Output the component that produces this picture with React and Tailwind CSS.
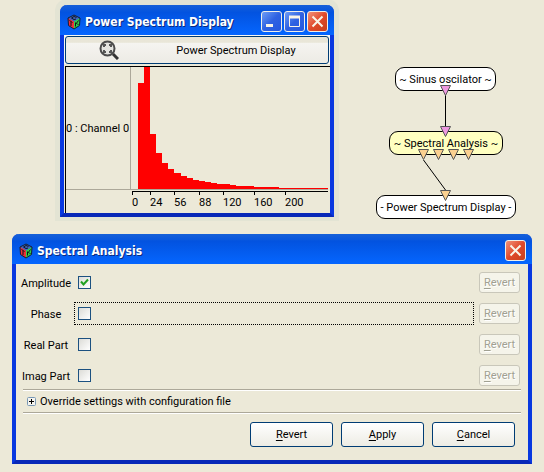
import React from "react";

const BARS = [
  [138, 6, 106], [144, 6, 122], [150, 6, 55], [156, 6, 36], [162, 6, 26], [168, 6, 20],
  [174, 7, 16], [181, 6, 13], [187, 6, 11], [193, 6, 9], [199, 6, 8], [205, 6, 7],
  [211, 6, 6], [217, 13, 5], [230, 6, 4], [236, 18, 3], [254, 25, 2], [279, 49, 1],
];

const TICKS = [
  [132, "0"], [150, "24"], [174, "56"], [199, "88"], [223, "120"], [254, "160"], [285, "200"],
];

function CubeIcon() {
  return (
    <svg width="14" height="16" viewBox="0 0 14 16" className="shrink-0" aria-hidden="true">
      <path d="M7 1 13 4 7 7.500 1 4Z" fill="#3f66c0" />
      <path d="M1 4 7 7.500V15L1.500 11.500Z" fill="#f03038" />
      <path d="M13 4 7 7.500V15L12.500 11.500Z" fill="#30d048" />
      <path d="M7 1 13 4 12.500 11.500 7 15 1.500 11.500 1 4Z" fill="none" stroke="#141c30" />
      <path d="M9.500 3.500 7 2.500 4.500 4 7 5.500 9 5M2.500 6.500 5.500 8.500M4 8V12M8.500 8.500V12.500M11.500 6.500 8.500 10.500M10 9.500 11.500 11" fill="none" stroke="#10131c" />
    </svg>
  );
}

function CaptionButton({ label, red, children }) {
  return (
    <button
      type="button"
      aria-label={label}
      className={
        "flex size-[21px] shrink-0 items-center justify-center rounded-[3px] border border-[#f0efe8] " +
        (red
          ? "bg-linear-to-br from-[#f09078] via-[#e0492a] to-[#c8401c]"
          : "bg-linear-to-br from-[#6f9cf5] via-[#2f62e2] to-[#2458e0]")
      }
    >
      <svg width="19" height="19" viewBox="0 0 19 19" fill="none" aria-hidden="true">
        {children}
      </svg>
    </button>
  );
}

const CloseGlyph = () => <path d="m4.500 4.500 10 10m0-10-10 10" stroke="#f8f4e8" strokeWidth="2" />;

function XpWindow({ title, controls, className, children }) {
  return (
    <section
      className={
        "absolute flex flex-col rounded-t-[7px] border-x-4 border-b-4 border-x-[#0838e0] border-b-[#0828b8] bg-[#ece9d8] " +
        className
      }
    >
      <header className="-mx-1 flex h-[30px] shrink-0 items-center gap-1 rounded-t-[7px] bg-linear-to-b from-[#1660d8] via-[#0353e0] via-25% to-[#0566ff] pt-[3px] pr-1.5 pl-[7px]">
        <CubeIcon />
        <h2 className="flex-1 whitespace-nowrap font-['DejaVu_Sans_Condensed','Noto_Sans',sans-serif] text-[12px] leading-4 font-bold text-white [text-shadow:1px_1px_0_#0a2a80]">
          {title}
        </h2>
        <div className="flex gap-0.5">{controls}</div>
      </header>
      {children}
    </section>
  );
}

function SpectrumWindow() {
  return (
    <XpWindow
      title="Power Spectrum Display"
      className="top-[5px] left-[60px] w-[274px] shadow-[0_-1px_0_5px_#e3e4d4]"
      controls={
        <>
          <CaptionButton label="Minimize"><path d="M4 13.500h7" stroke="#f8f4e8" strokeWidth="3" /></CaptionButton>
          <CaptionButton label="Maximize"><path d="M4.500 5v9.500h10V5M4 5.500h11" stroke="#f8f4e8" strokeWidth="1" /><path d="M4 5h11" stroke="#f8f4e8" strokeWidth="3" /></CaptionButton>
          <CaptionButton label="Close" red><CloseGlyph /></CaptionButton>
        </>
      }
    >
      <div className="bg-[#f8f7f2] px-px pt-px">
        <button type="button" className="grid h-7 w-full grid-cols-[86px_1fr] items-center rounded-[3px] border border-[#003c74] bg-linear-to-b from-[#e9e6d8] from-20% via-[#f5f4f0] via-25% to-[#edebe5]">
          <svg width="20" height="20" viewBox="0 0 20 20" className="justify-self-center" fill="none" aria-hidden="true">
            <circle cx="8.500" cy="8.500" r="7" fill="#e4e4e0" stroke="#4c4c4c" strokeWidth="2" />
            <path d="m14 14 5 5" stroke="#333" strokeWidth="3" />
            <path d="M5 7V5h2m3 0h2v2m0 3v2h-2m-3 0H5v-2" stroke="#555" strokeWidth="2" />
          </svg>
          <span className="pt-0.5 pr-2">Power Spectrum Display</span>
        </button>
      </div>
      <div className="mt-0.5 ml-px border-t border-l border-black">
        <svg width="264" height="146" viewBox="66 67 264 146" role="img" aria-label="Power spectrum of channel 0">
          <path d="M130.500 67V190M66 189.500H328" stroke="#aca899" />
          <text x="66" y="132">0 : Channel 0</text>
          {BARS.map(([x, w, h]) => (
            <rect key={x} x={x} y={189 - h} width={w} height={h} fill="#f00" />
          ))}
          <path d="M132 191.500H328" stroke="#000" />
          {TICKS.map(([x, label]) => (
            <g key={label}>
              <rect x={x} y="191" width="1" height="4" />
              <text x={x} y="206">{label}</text>
            </g>
          ))}
        </svg>
      </div>
    </XpWindow>
  );
}

function SmallRevert({ name }) {
  return (
    <button type="button" disabled aria-label={"Revert " + name} className="h-[21px] w-[41px] rounded-[3px] border border-[#c9c7ba] bg-[#f5f4ea] pt-px leading-4 text-[#a1a192] [text-shadow:1px_1px_0_#fff]">
      <span className="underline underline-offset-2">R</span>evert
    </button>
  );
}

function OptionRow({ name, checked, focused }) {
  return (
    <div className="grid grid-cols-[48px_1fr_41px] items-center">
      <label htmlFor={name} className="justify-self-center pt-0.5 whitespace-nowrap">{name}</label>
      <div className={"mr-[5px] ml-1 flex h-[23px] items-center border border-dotted pl-[3px] " + (focused ? "border-black" : "border-transparent")}>
        <span className="grid size-[13px]">
          <input
            id={name}
            type="checkbox"
            defaultChecked={checked}
            className="peer col-start-1 row-start-1 size-[13px] appearance-none border border-[#1c5180] bg-linear-to-br from-[#dcdcd7] to-white"
          />
          <svg viewBox="0 0 13 13" className="pointer-events-none col-start-1 row-start-1 hidden size-[13px] peer-checked:block" fill="none" aria-hidden="true">
            <path d="m3 5.500 2.500 3 4.500-5" stroke="#21a121" strokeWidth="2" />
          </svg>
        </span>
      </div>
      <SmallRevert name={name} />
    </div>
  );
}

function ActionButton({ children }) {
  const [first, ...rest] = children;
  return (
    <button type="button" className="h-[25px] w-[83px] rounded-[3px] border border-[#003c74] bg-linear-to-b from-white to-[#edece4] pt-px">
      <span className="underline underline-offset-2">{first}</span>
      {rest.join("")}
    </button>
  );
}

function AnalysisDialog() {
  return (
    <XpWindow
      title="Spectral Analysis"
      className="top-[234px] right-3 left-3"
      controls={<CaptionButton label="Close" red><CloseGlyph /></CaptionButton>}
    >
      <form className="pt-[7px] pr-[7px] pb-[13px] pl-1.5" onSubmit={(e) => e.preventDefault()}>
        <div className="flex flex-col gap-2 pr-px">
          <OptionRow name="Amplitude" checked />
          <OptionRow name="Phase" focused />
          <OptionRow name="Real Part" />
          <OptionRow name="Imag Part" />
        </div>
        <div className="mt-0.5 ml-px flex h-6 items-center border-y border-[#aca899] pl-1 shadow-[0_1px_0_#fff,inset_0_1px_0_#fff]">
          <button type="button" className="flex items-center gap-1">
            <svg width="9" height="9" viewBox="0 0 9 9" aria-hidden="true">
              <rect x=".5" y=".5" width="8" height="8" rx="1" fill="#f4f3ee" stroke="#7898b5" />
              <path d="M2 4.500h5M4.500 2v5" stroke="#000" />
            </svg>
            <span className="pt-0.5">Override settings with configuration file</span>
          </button>
        </div>
        <div className="mt-[9px] flex justify-end gap-2 pr-1.5">
          <ActionButton>Revert</ActionButton>
          <ActionButton>Apply</ActionButton>
          <ActionButton>Cancel</ActionButton>
        </div>
      </form>
    </XpWindow>
  );
}

function Port({ x, y, color }) {
  return <path d={`M${x - 5} ${y}h10l-5 10Z`} fill={color} stroke="#555" />;
}

function Node({ className, children }) {
  return (
    <div className={"absolute flex h-6 items-center justify-center whitespace-nowrap rounded-[9px] border border-black pt-0.5 " + className}>
      {children}
    </div>
  );
}

function NodeGraph() {
  return (
    <div className="absolute top-0 left-[370px] h-[230px] w-[174px]">
      <Node className="top-[67px] left-[25px] w-[101px] bg-white">~ Sinus oscilator ~</Node>
      <Node className="top-[131px] left-[19px] w-[114px] bg-[#ffffc0]">~ Spectral Analysis ~</Node>
      <Node className="top-[195px] left-[6px] w-[140px] bg-white">- Power Spectrum Display -</Node>
      <svg className="absolute inset-0" width="174" height="230" viewBox="370 0 174 230" fill="none" aria-hidden="true">
        <path d="M445.500 95v31M423.500 160l22 30" stroke="#000" />
        <Port x={445.5} y={85.5} color="#ee98e0" />
        <Port x={445.5} y={126.5} color="#ee98e0" />
        <Port x={423.5} y={149.5} color="#fad090" />
        <Port x={438.5} y={149.5} color="#fad090" />
        <Port x={453.5} y={149.5} color="#fad090" />
        <Port x={468.5} y={149.5} color="#fad090" />
        <Port x={445.5} y={190.5} color="#fad090" />
      </svg>
    </div>
  );
}

export default function App() {
  return (
    <main className="relative min-h-screen overflow-hidden bg-[#ece9d8] font-['Roboto','Noto_Sans',sans-serif] text-[11px] leading-4 text-black">
      <SpectrumWindow />
      <NodeGraph />
      <AnalysisDialog />
    </main>
  );
}
